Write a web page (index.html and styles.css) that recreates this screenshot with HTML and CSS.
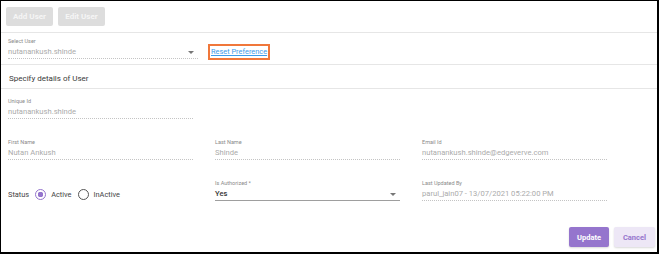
FILE: index.html
```html
<!DOCTYPE html>
<html lang="en">
<head>
  <meta charset="UTF-8" />
  <title>User Preference</title>
  <link rel="stylesheet" href="styles.css">
</head>
<body>
  <div class="frame">

    <!-- toolbar -->
    <div class="toolbar">
      <button class="tool-btn">Add User</button>
      <button class="tool-btn">Edit User</button>
    </div>

    <!-- select user -->
    <div class="select-row">
      <div class="field select-field">
        <div class="field-label">Select User</div>
        <div class="field-value">nutanankush.shinde<span class="caret"></span></div>
      </div>
      <a href="#" class="reset-link">Reset Preference</a>
    </div>

    <div class="section-title">Specify details of User</div>

    <div class="details">
      <div class="field">
        <div class="field-label">Unique Id</div>
        <div class="field-value">nutanankush.shinde</div>
      </div>

      <div class="grid-row">
        <div class="field">
          <div class="field-label">First Name</div>
          <div class="field-value">Nutan Ankush</div>
        </div>
        <div class="field">
          <div class="field-label">Last Name</div>
          <div class="field-value">Shinde</div>
        </div>
        <div class="field">
          <div class="field-label">Email Id</div>
          <div class="field-value">nutanankush.shinde@edgeverve.com</div>
        </div>
      </div>

      <div class="grid-row">
        <div class="status">
          <span>Status</span>
          <label class="radio checked"><span class="dot"></span>Active</label>
          <label class="radio"><span class="dot"></span>InActive</label>
        </div>
        <div class="field editable">
          <div class="field-label">Is Authorized *</div>
          <div class="field-value">Yes<span class="caret"></span></div>
        </div>
        <div class="field">
          <div class="field-label">Last Updated By</div>
          <div class="field-value">parul_jain07 - 13/07/2021 05:22:00 PM</div>
        </div>
      </div>
    </div>

    <div class="actions">
      <button class="btn-update">Update</button>
      <button class="btn-cancel">Cancel</button>
    </div>

  </div>
</body>
</html>
```

FILE: styles.css
```css
body {
  margin: 0;
  font-family: Roboto, "Liberation Sans", sans-serif;
  background: #ffffff;
  color: #333333;
}

.frame {
  width: 656px;
  height: 251px;
  border-top: 1px solid #000000;
  border-left: 1px solid #000000;
  border-right: 2px solid #000000;
  border-bottom: 2px solid #000000;
  display: flex;
  flex-direction: column;
}

.toolbar {
  height: 25px;
  padding: 6px 0 0 5px;
  display: flex;
  gap: 5px;
  border-bottom: 1px solid #e6e6e6;
}

.tool-btn {
  width: 47px;
  height: 19px;
  padding: 0;
  border: none;
  border-radius: 2px;
  background: #dddddd;
  color: #f5f5f5;
  font-family: inherit;
  font-size: 8px;
  font-weight: 700;
}

.select-row {
  height: 27px;
  padding: 4px 0 0 7px;
  display: flex;
  align-items: flex-start;
  border-bottom: 1px solid #e6e6e6;
}

.field {
  width: 185px;
  border-bottom: 1px dotted #c4c4c4;
}

.select-field {
  width: 190px;
}

.field-label {
  font-size: 5.5px;
  line-height: 8px;
  color: #8a8a8a;
}

.field-value {
  position: relative;
  font-size: 7.6px;
  line-height: 13px;
  color: #ababab;
}

.caret {
  position: absolute;
  right: 4px;
  top: 6px;
  border-left: 3px solid transparent;
  border-right: 3px solid transparent;
  border-top: 3px solid #777777;
}

.reset-link {
  margin: 8px 0 0 11px;
  padding: 0 1px;
  height: 12px;
  line-height: 12px;
  border: 1px solid #f0773a;
  box-shadow: 0 0 0 1px #f0773a;
  font-size: 7.4px;
  color: #3d9be9;
}

.section-title {
  height: 23px;
  line-height: 28px;
  padding-left: 8px;
  font-size: 8px;
  color: #3a3a3a;
  border-bottom: 1px solid #e6e6e6;
}

.details {
  padding: 8px 0 0 7px;
  display: flex;
  flex-direction: column;
  gap: 19px;
}

.grid-row {
  display: grid;
  grid-template-columns: repeat(3, 185px);
  column-gap: 22px;
  align-items: end;
}

.editable {
  border-bottom: 1px solid #9e9e9e;
}

.editable .field-value {
  color: #333333;
  font-weight: 500;
}

.status {
  display: flex;
  align-items: center;
  height: 14px;
  font-size: 7.4px;
  color: #444444;
}

.radio {
  display: flex;
  align-items: center;
  margin-left: 6px;
}

.dot {
  box-sizing: border-box;
  width: 11px;
  height: 11px;
  margin-right: 5px;
  border: 1.3px solid #555555;
  border-radius: 50%;
}

.checked .dot {
  border-color: #9575cd;
  background: radial-gradient(circle, #9575cd 0 2.6px, transparent 3px);
}

.actions {
  margin-top: auto;
  padding: 0 2px 5px 0;
  display: flex;
  justify-content: flex-end;
  gap: 5px;
}

.actions button {
  height: 20px;
  padding: 0;
  border: none;
  border-radius: 2px;
  font-family: inherit;
  font-size: 7.5px;
  font-weight: 700;
  box-shadow: 0 1px 2px rgba(0, 0, 0, 0.15);
}

.btn-update {
  width: 40px;
  background: #9575cd;
  color: #ffffff;
}

.btn-cancel {
  width: 41px;
  background: #ede7f6;
  color: #9575cd;
}
```
